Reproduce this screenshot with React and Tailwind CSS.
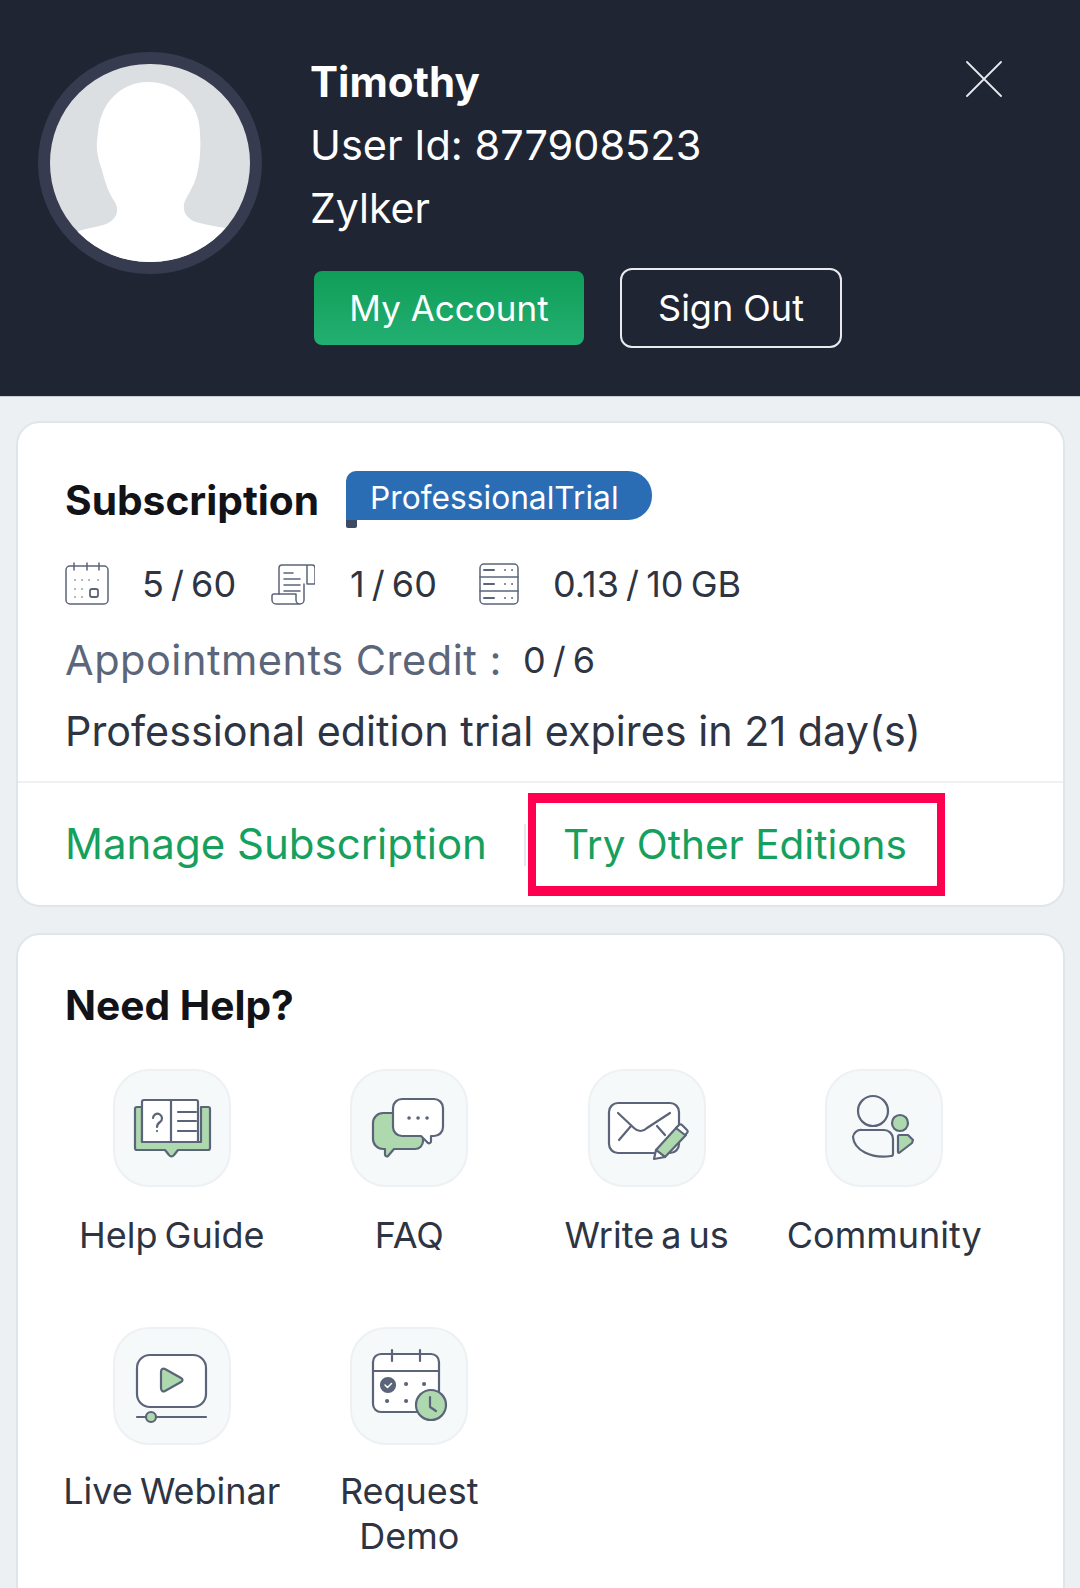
import React from "react";

const INK = "#5b6478";
const LEAF = "#aed9ae";

const Avatar = () => (
  <div className="w-[224px] h-[222px] shrink-0 rounded-full border-[12px] border-[#373b4f] bg-[#dcdfe2] overflow-hidden">
    <svg viewBox="0 0 200 198" className="w-full h-full block">
      <path
        fill="#fff"
        d="M98 18C128 18 150 40 150 69C151 85 150 98 147 110C144 124 136 132 134 140C133 148 136 153 143 157C155 161 170 163 181 165L192 200L10 200L26 168C40 163 52 163 60 158C68 152 68 146 66 140C58 128 55 118 52 106C46 90 46 80 48 69C50 40 70 18 98 18Z"
      />
    </svg>
  </div>
);

const CalendarSmall = () => (
  <svg viewBox="0 0 44 44" className="w-[44px] h-[44px]" fill="none" stroke={INK} strokeWidth="1.500" strokeLinecap="round">
    <rect x="1" y="4" width="42" height="38" rx="4" />
    <path d="M9 1v7M22 1v7M34 1v7" />
    <rect x="25" y="27" width="8" height="8" rx="2" strokeWidth="1.800" />
    <path d="M10 18h.1M17 18h.1M24 18h.1M33 18h.1M10 27h.1M17 27h.1M10 35h.1M17 35h.1" strokeWidth="1.600" />
  </svg>
);

const ScrollSmall = () => (
  <svg viewBox="0 0 44 44" className="w-[44px] h-[44px]" fill="none" stroke={INK} strokeWidth="1.500" strokeLinecap="round" strokeLinejoin="round">
    <path d="M8 32V6a3 3 0 0 1 3-3h30a3 3 0 0 1 3 3v15a1 1 0 0 1-1 1h-7V3" />
    <path d="M13 11h9M13 17h16M13 23h16M13 29h16" strokeWidth="1.600" />
    <path d="M3 32h22v6a4 4 0 0 0 4 4H5a4 4 0 0 1-4-4v-4a2 2 0 0 1 2-2ZM29 42a4 4 0 0 0 4-4V22" />
  </svg>
);

const ServerSmall = () => (
  <svg viewBox="0 0 40 44" className="w-[40px] h-[44px]" fill="none" stroke={INK} strokeWidth="1.500" strokeLinecap="round">
    <rect x="1" y="2" width="38" height="40" rx="4" />
    <path d="M1 15h38M1 29h38" />
    <path d="M5 8h10M5 22h10M5 36h10" strokeWidth="2" />
    <path d="M26 8h.1M33 8h.1M26 22h.1M33 22h.1M26 36h.1M33 36h.1" strokeWidth="1.800" />
  </svg>
);

const BookIcon = () => (
  <>
    <path d="M29 38h-5a2 2 0 0 0-2 2v39a2 2 0 0 0 2 2h28l4 5a3 3 0 0 0 5 0l4-5h30a2 2 0 0 0 2-2V40a2 2 0 0 0-2-2h-7v35H29Z" fill={LEAF} />
    <path d="M29 33a2 2 0 0 1 2-2h27v42H29ZM58 31h25a2 2 0 0 1 2 2v40H58Z" fill="#fff" />
    <path d="M40 49a4.500 4.500 0 1 1 7 4c-2 1.500-3 2.500-3 5M44 62v.1M65 43h18M65 52h18M65 62h18" />
  </>
);

const FaqIcon = () => (
  <>
    <path d="M33 44h32a8 8 0 0 1 8 8v20a8 8 0 0 1-8 8H44l-6 7a2 2 0 0 1-3-1v-6h-2a10 10 0 0 1-10-10V54a10 10 0 0 1 10-10Z" fill={LEAF} />
    <path d="M52 30h32a9 9 0 0 1 9 9v19a9 9 0 0 1-9 9h-3v5a2 2 0 0 1-3 2l-7-7H52a9 9 0 0 1-9-9V39a9 9 0 0 1 9-9Z" fill="#fff" />
    <path d="M59 49h.1M68 49h.1M77 49h.1" strokeWidth="3.500" />
  </>
);

const MailIcon = () => (
  <>
    <rect x="21" y="34" width="70" height="50" rx="9" fill="#fff" />
    <path d="M30 44l16 15c4 4 9 4 13 0l23-15M43 57 31 71M69 57l8 9" />
    <path d="M68 81 89 58l9 8-21 22Z" fill={LEAF} />
    <path d="M68 81l-2 9 11-2Z" fill="#fff" />
    <path d="M88 59l3-3a2 2 0 0 1 3 0l5 5a2 2 0 0 1 0 3l-2 2Z" fill="#fff" />
  </>
);

const CommunityIcon = () => (
  <>
    <circle cx="48" cy="42" r="15" />
    <path d="M37 61h22a9 9 0 0 1 9 9v15a2 2 0 0 1-2 2c-20 3-37-6-38-19a8 8 0 0 1 9-7Z" />
    <circle cx="75" cy="54" r="8" fill={LEAF} />
    <path d="M74 66h9l5 5-1 3-13 10a1 1 0 0 1-1-1V67Z" fill={LEAF} />
  </>
);

const WebinarIcon = () => (
  <>
    <rect x="24" y="28" width="69" height="52" rx="13" fill="#fff" />
    <path d="M48 45c0-3 2-4 4-3l16 9c2 1 2 3 0 4l-16 9c-2 1-4 0-4-3Z" fill={LEAF} />
    <path d="M24 90h69" />
    <circle cx="38" cy="90" r="5" fill={LEAF} />
  </>
);

const DemoIcon = () => (
  <>
    <rect x="23" y="27" width="66" height="58" rx="8" fill="#fff" />
    <path d="M23 44h66M42 23v11M70 23v11" />
    <circle cx="38" cy="58" r="7" fill={INK} />
    <path d="M35 58l2.500 2.500 4-4" stroke="#fff" strokeWidth="1.500" />
    <path d="M56 57h.1M74 57h.1M37 74h.1M56 74h.1" strokeWidth="4" />
    <circle cx="81" cy="78" r="15" fill={LEAF} />
    <path d="M80 70v10l6 4" />
  </>
);

const helpItems = [
  { label: "Help Guide", Icon: BookIcon },
  { label: "FAQ", Icon: FaqIcon },
  { label: "Write a us", Icon: MailIcon },
  { label: "Community", Icon: CommunityIcon },
  { label: "Live Webinar", Icon: WebinarIcon, lower: true },
  { label: "Request Demo", Icon: DemoIcon, lower: true },
];

const HelpItem = ({ label, Icon, lower }) => (
  <div className="flex flex-col items-center h-[258px]">
    <div className="w-[118px] h-[118px] rounded-[36px] border-2 border-[#edf1f3] bg-[#f6f9f9]">
      <svg
        viewBox="2 2 114 114"
        className="w-[114px] h-[114px]"
        fill="none"
        stroke={INK}
        strokeWidth="2.200"
        strokeLinecap="round"
        strokeLinejoin="round"
      >
        <Icon />
      </svg>
    </div>
    <p className={`${lower ? "mt-[24px]" : "mt-[26px]"} text-center text-[36px] leading-[45px] text-[#2e3442] [word-spacing:-3px] max-w-[225px]`}>
      {label}
    </p>
  </div>
);

export default function App() {
  return (
    <div
      className="h-screen overflow-hidden bg-[#ecf0f3]"
      style={{ fontFamily: "Inter, 'Noto Sans', sans-serif" }}
    >
      <header className="h-[397px] bg-[#1f2533] flex pl-[38px] pt-[52px] border-b border-[#c9ced6]">
        <Avatar />
        <div className="ml-[48px] -mt-[2px] text-white">
          <p className="text-[42px] leading-[63px] font-bold">Timothy</p>
          <p className="text-[41.500px] leading-[64px]">User Id: 877908523</p>
          <p className="text-[41px] leading-[62px]">Zylker</p>
          <div className="flex items-center gap-[36px] mt-[29px] ml-[4px]">
            <button className="w-[270px] h-[74px] rounded-[8px] bg-gradient-to-b from-[#0f9d58] to-[#22b072] text-[35px]">
              My Account
            </button>
            <button className="w-[222px] h-[80px] rounded-[12px] border-2 border-[#e8eaee] text-[36px]">
              Sign Out
            </button>
          </div>
        </div>
        <svg viewBox="0 0 36 36" className="w-[36px] h-[36px] ml-auto mr-[78px] mt-[9px]" stroke="#e8eaee" strokeWidth="1.800" strokeLinecap="round">
          <path d="M1 1l34 34M35 1 1 35" />
        </svg>
      </header>

      <section className="ml-4 mr-[15px] mt-[24px] h-[486px] rounded-[24px] border-2 border-[#dfe6ea] bg-white flex flex-col">
        <div className="pl-[47px] pt-[48px] h-[360px] border-b-2 border-[#edf1f3] text-[#2e3442]">
          <div className="flex items-start">
            <h2 className="text-[40.700px] leading-[60px] font-bold text-[#111318]">Subscription</h2>
            <div className="ml-[27px]">
              <div className="w-[306px] h-[49px] bg-[#2b6db5] rounded-tl-[10px] rounded-r-[24px] text-white text-[31.700px] leading-[53px] pl-[24px]">
                ProfessionalTrial
              </div>
              <div className="w-[11px] h-[8px] bg-[#3c4a63] rounded-b-[2px]"></div>
            </div>
          </div>
          <div className="flex items-center mt-[31px] text-[36px] leading-[44px] [word-spacing:-3px]">
            <CalendarSmall />
            <span className="ml-[33px] w-[129px]">5 / 60</span>
            <ScrollSmall />
            <span className="ml-[35px] w-[129px]">1 / 60</span>
            <ServerSmall />
            <span className="ml-[34px]">0.13 / 10 GB</span>
          </div>
          <div className="flex items-center mt-[29px] leading-[50px]">
            <span className="text-[41.500px] tracking-[0.5px] text-[#5b667a]">Appointments Credit :</span>
            <span className="ml-[21px] text-[36px] [word-spacing:-3px]">0 / 6</span>
          </div>
          <p className="text-[41.300px] leading-[50px] mt-[21px]">Professional edition trial expires in 21 day(s)</p>
        </div>
        <div className="flex-1 flex items-center pl-[47px] pt-[1px] text-[#16a05d]">
          <span className="text-[42px] -mt-[2px]">Manage Subscription</span>
          <div className="ml-[37px] w-[2px] h-[42px] bg-[#e4e8ec]"></div>
          <div className="ml-[2px] w-[417px] h-[103px] border-x-[8px] border-y-[10px] border-[#ff0050] flex items-center pl-[27px] pt-[2px] text-[40.500px]">
            Try Other Editions
          </div>
        </div>
      </section>

      <section className="ml-4 mr-[15px] mt-[26px] rounded-[24px] border-2 border-[#dfe6ea] bg-white pt-[41px] h-[700px]">
        <h2 className="pl-[47px] text-[40.700px] leading-[60px] font-bold text-[#111318]">Need Help?</h2>
        <div className="grid grid-cols-4 w-[950px] ml-[35px] mt-[33px]">
          {helpItems.map((item) => (
            <HelpItem key={item.label} {...item} />
          ))}
        </div>
      </section>
    </div>
  );
}
